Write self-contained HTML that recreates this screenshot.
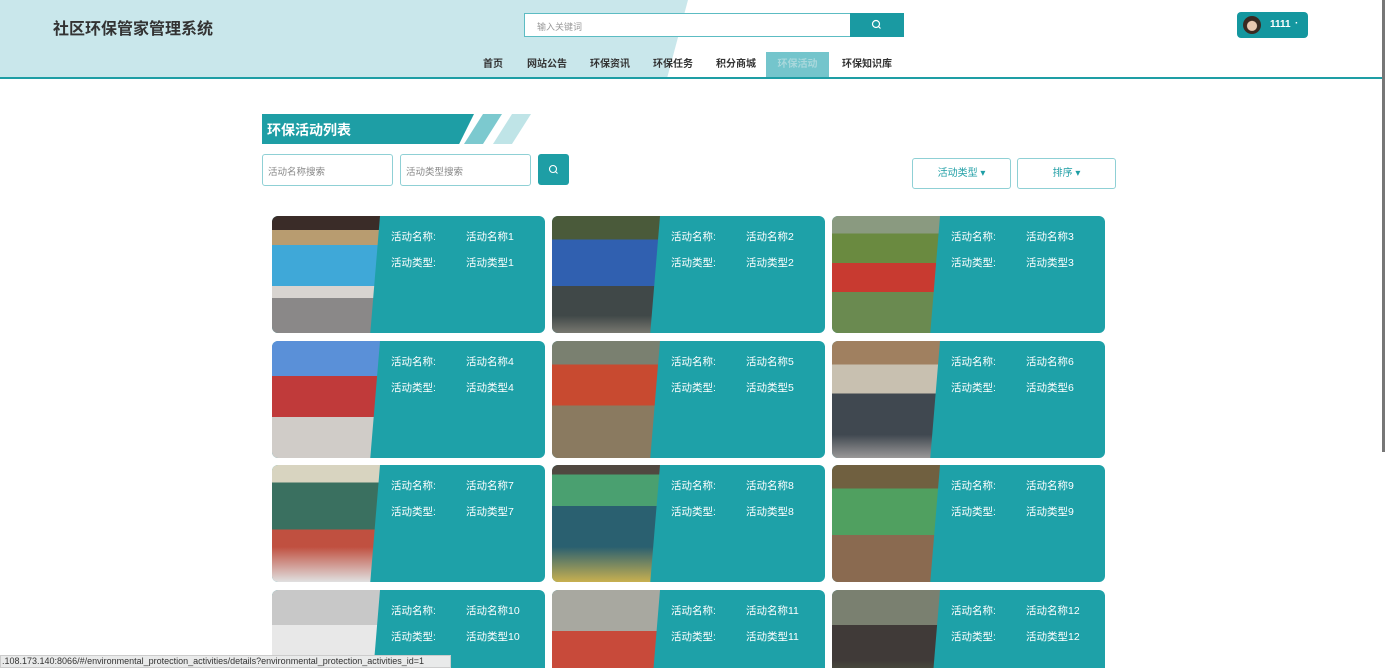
<!DOCTYPE html>
<html style="width:1385px;height:668px;overflow:hidden"><head><meta charset="utf-8">
<style>
*{margin:0;padding:0;box-sizing:border-box}
body{width:1385px;height:668px;overflow:hidden;background:#fff;font-family:"Liberation Sans","Noto Sans CJK SC",sans-serif;position:relative}
.hdr{position:absolute;left:0;top:0;width:1385px;height:79px;background:#fff;border-bottom:2px solid #1e9ea5}
.hbg{position:absolute;left:0;top:0;width:688px;height:77px;background:#c9e7eb;clip-path:polygon(0 0,100% 0,97% 100%,0 100%)}
.logo{position:absolute;left:53px;top:15px;font-size:16px;font-weight:bold;color:#333}
.sinput{position:absolute;left:524px;top:13px;width:327px;height:24px;border:1px solid #5cbcc3;background:#fff;font-size:9px;color:#999;padding:6px 12px}
.sbtn{position:absolute;left:850px;top:13px;width:54px;height:24px;background:#1a9aa2}
.user{position:absolute;left:1237px;top:12px;width:71px;height:26px;background:#14979f;border-radius:4px;color:#fff;font-size:10px;font-weight:bold}
.av{position:absolute;left:6px;top:4px;width:18px;height:18px;border-radius:50%;background:radial-gradient(circle at 50% 55%,#e8c8b0 0 35%,#3a2a22 40%)}
.nav{position:absolute;top:52px;height:25px;font-size:10px;font-weight:bold;color:#333;line-height:25px}
.nav span{position:absolute;white-space:nowrap}
.title{position:absolute;left:262px;top:114px;width:212px;height:30px;background:#1e9ea5;clip-path:polygon(0 0,100% 0,93% 100%,0 100%);color:#fff;font-size:14px;font-weight:bold;padding:6px 5px}
.s1{position:absolute;top:114px;height:30px;width:38px;clip-path:polygon(50% 0,100% 0,50% 100%,0 100%)}
.inp{position:absolute;top:154px;width:131px;height:32px;border:1px solid #8fd0d5;border-radius:3px;font-size:9.5px;color:#888;padding:9px 5px}
.btn2{position:absolute;top:158px;height:31px;border:1px solid #8fd0d5;border-radius:3px;font-size:10px;color:#1e9ea5;text-align:center;line-height:29px}
.card{position:absolute;width:273px;height:117px;background:#1ea1a8;border-radius:6px;overflow:hidden;color:#fff;font-size:10.5px}
.card.last{height:78px;border-radius:6px 6px 0 0}
.img{position:absolute;left:0;top:0;width:108px;height:117px;clip-path:polygon(0 0,100% 0,91% 100%,0 100%)}
.l{position:absolute;white-space:nowrap}
.status{position:absolute;left:0;top:655px;width:451px;height:13px;background:#e9eaea;border:1px solid #ccc;font-size:9px;color:#333;line-height:11px;padding-left:1px;white-space:nowrap;overflow:hidden}
.sb{position:absolute;left:1382px;top:0;width:3px;height:452px;background:#777}
</style></head><body>
<div class="hdr">
 <div class="hbg"></div>
 <div class="logo">社区环保管家管理系统</div>
 <div class="sinput">输入关键词</div>
 <div class="sbtn"><svg width="54" height="24"><circle cx="26" cy="11" r="3.5" fill="none" stroke="#fff" stroke-width="1.2"/><line x1="28.5" y1="13.5" x2="30.5" y2="15.5" stroke="#fff" stroke-width="1.2"/></svg></div>
 <div class="user"><div class="av"></div><span style="position:absolute;left:33px;top:7px">1111</span><span style="position:absolute;left:58px;top:6px">·</span></div>
 <div class="nav" style="left:0;width:1385px">
  <span style="left:483px">首页</span>
  <span style="left:527px">网站公告</span>
  <span style="left:590px">环保资讯</span>
  <span style="left:653px">环保任务</span>
  <span style="left:716px">积分商城</span>
  <span style="left:766px;width:63px;height:25px;background:#74c5cc;color:#a9d8dc;text-align:center">环保活动</span>
  <span style="left:842px">环保知识库</span>
 </div>
</div>
<div class="title">环保活动列表</div>
<div class="s1" style="left:464px;background:#7cc9cf"></div>
<div class="s1" style="left:493px;background:#bfe4e7"></div>
<div class="inp" style="left:262px">活动名称搜索</div>
<div class="inp" style="left:400px">活动类型搜索</div>
<div style="position:absolute;left:538px;top:154px;width:31px;height:31px;background:#1e9ea5;border-radius:3px"><svg width="31" height="31"><circle cx="15" cy="15" r="3.5" fill="none" stroke="#fff" stroke-width="1.1"/><line x1="17.5" y1="17.5" x2="19.5" y2="19.5" stroke="#fff" stroke-width="1.1"/></svg></div>
<div class="btn2" style="left:912px;width:99px">活动类型 ▾</div>
<div class="btn2" style="left:1017px;width:99px">排序 ▾</div>

<div class="card" style="left:272px;top:216px"><div class="img" style="background:linear-gradient(#3a2c28 0 12%,#b89c70 12% 25%,#3fa8d8 25% 60%,#d8d4d0 60% 70%,#8a8888 70%)"></div><span class="l" style="left:119px;top:13px">活动名称:</span><span class="l" style="left:194px;top:13px">活动名称1</span><span class="l" style="left:119px;top:39px">活动类型:</span><span class="l" style="left:194px;top:39px">活动类型1</span></div>
<div class="card" style="left:552px;top:216px"><div class="img" style="background:linear-gradient(#4a5a3a 0 20%,#3060b0 20% 60%,#404848 60% 85%,#787870)"></div><span class="l" style="left:119px;top:13px">活动名称:</span><span class="l" style="left:194px;top:13px">活动名称2</span><span class="l" style="left:119px;top:39px">活动类型:</span><span class="l" style="left:194px;top:39px">活动类型2</span></div>
<div class="card" style="left:832px;top:216px"><div class="img" style="background:linear-gradient(#8a9a80 0 15%,#6a8a40 15% 40%,#c83a30 40% 65%,#6a8a50 65%)"></div><span class="l" style="left:119px;top:13px">活动名称:</span><span class="l" style="left:194px;top:13px">活动名称3</span><span class="l" style="left:119px;top:39px">活动类型:</span><span class="l" style="left:194px;top:39px">活动类型3</span></div>

<div class="card" style="left:272px;top:341px"><div class="img" style="background:linear-gradient(#5a90d8 0 30%,#c03a3a 30% 65%,#d0ccc8 65%)"></div><span class="l" style="left:119px;top:13px">活动名称:</span><span class="l" style="left:194px;top:13px">活动名称4</span><span class="l" style="left:119px;top:39px">活动类型:</span><span class="l" style="left:194px;top:39px">活动类型4</span></div>
<div class="card" style="left:552px;top:341px"><div class="img" style="background:linear-gradient(#7a8070 0 20%,#c84a30 20% 55%,#8a7a60 55%)"></div><span class="l" style="left:119px;top:13px">活动名称:</span><span class="l" style="left:194px;top:13px">活动名称5</span><span class="l" style="left:119px;top:39px">活动类型:</span><span class="l" style="left:194px;top:39px">活动类型5</span></div>
<div class="card" style="left:832px;top:341px"><div class="img" style="background:linear-gradient(#a08060 0 20%,#c8c0b0 20% 45%,#404850 45% 80%,#9a9898)"></div><span class="l" style="left:119px;top:13px">活动名称:</span><span class="l" style="left:194px;top:13px">活动名称6</span><span class="l" style="left:119px;top:39px">活动类型:</span><span class="l" style="left:194px;top:39px">活动类型6</span></div>

<div class="card" style="left:272px;top:465px"><div class="img" style="background:linear-gradient(#d8d4c0 0 15%,#3a7060 15% 55%,#c05040 55% 70%,#e0e0e0)"></div><span class="l" style="left:119px;top:13px">活动名称:</span><span class="l" style="left:194px;top:13px">活动名称7</span><span class="l" style="left:119px;top:39px">活动类型:</span><span class="l" style="left:194px;top:39px">活动类型7</span></div>
<div class="card" style="left:552px;top:465px"><div class="img" style="background:linear-gradient(#504840 0 8%,#4aa070 8% 35%,#2a6070 35% 70%,#c8b050)"></div><span class="l" style="left:119px;top:13px">活动名称:</span><span class="l" style="left:194px;top:13px">活动名称8</span><span class="l" style="left:119px;top:39px">活动类型:</span><span class="l" style="left:194px;top:39px">活动类型8</span></div>
<div class="card" style="left:832px;top:465px"><div class="img" style="background:linear-gradient(#706040 0 20%,#50a060 20% 60%,#8a6a50 60%)"></div><span class="l" style="left:119px;top:13px">活动名称:</span><span class="l" style="left:194px;top:13px">活动名称9</span><span class="l" style="left:119px;top:39px">活动类型:</span><span class="l" style="left:194px;top:39px">活动类型9</span></div>

<div class="card last" style="left:272px;top:590px"><div class="img" style="background:linear-gradient(#c8c8c8 0 30%,#e8e8e8 30% 60%,#6a7060)"></div><span class="l" style="left:119px;top:13px">活动名称:</span><span class="l" style="left:194px;top:13px">活动名称10</span><span class="l" style="left:119px;top:39px">活动类型:</span><span class="l" style="left:194px;top:39px">活动类型10</span></div>
<div class="card last" style="left:552px;top:590px"><div class="img" style="background:linear-gradient(#a8a8a0 0 35%,#c84a3a 35% 70%,#708050)"></div><span class="l" style="left:119px;top:13px">活动名称:</span><span class="l" style="left:194px;top:13px">活动名称11</span><span class="l" style="left:119px;top:39px">活动类型:</span><span class="l" style="left:194px;top:39px">活动类型11</span></div>
<div class="card last" style="left:832px;top:590px"><div class="img" style="background:linear-gradient(#7a8070 0 30%,#403a38 30% 60%,#6a8a50)"></div><span class="l" style="left:119px;top:13px">活动名称:</span><span class="l" style="left:194px;top:13px">活动名称12</span><span class="l" style="left:119px;top:39px">活动类型:</span><span class="l" style="left:194px;top:39px">活动类型12</span></div>

<div class="status">.108.173.140:8066/#/environmental_protection_activities/details?environmental_protection_activities_id=1</div>
<div class="sb"></div>
</body></html>
